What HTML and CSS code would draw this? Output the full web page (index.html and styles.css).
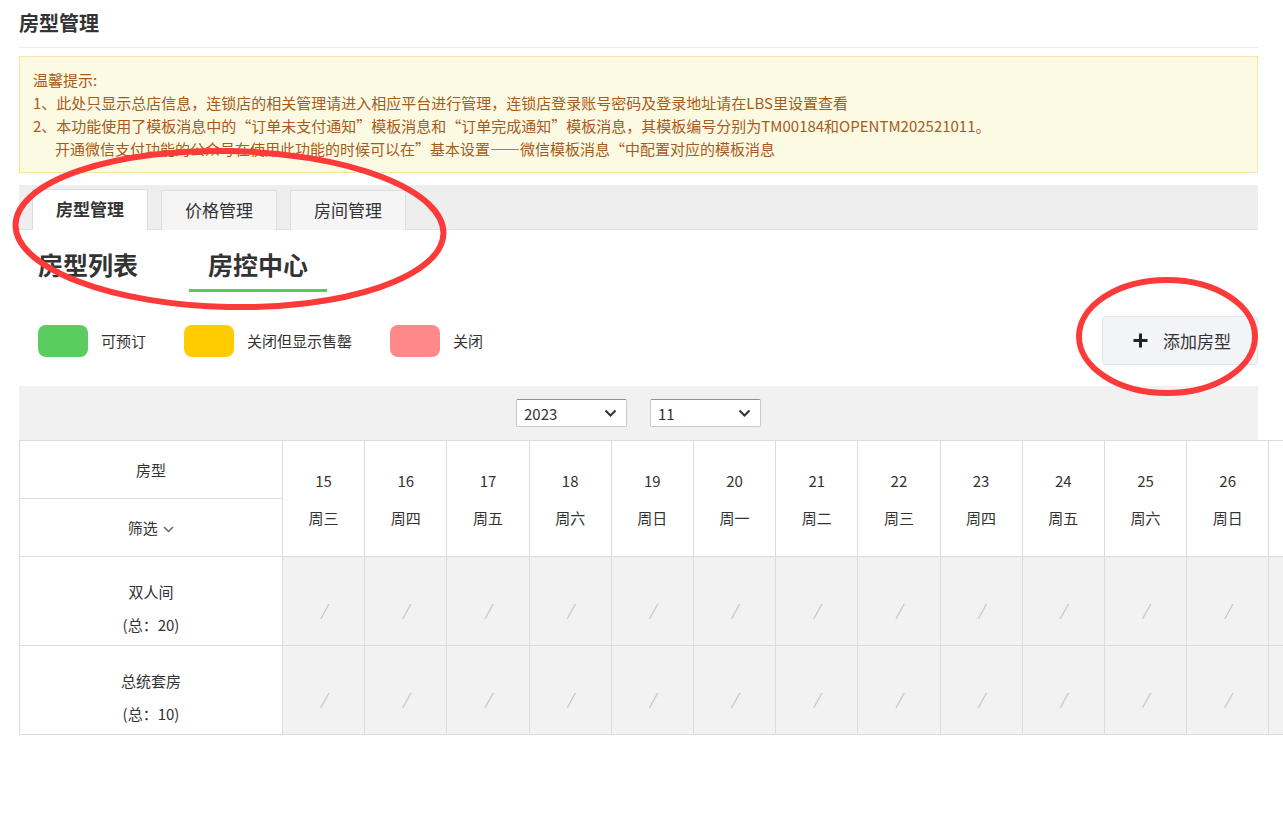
FILE: index.html
```html
<!DOCTYPE html>
<html lang="zh-CN">
<head>
    <meta charset="UTF-8">
    <title>房型管理</title>
    <link rel="stylesheet" href="styles.css">
</head>
<body>

<div class="page">
    <div class="page-title">房型管理</div>

    <!-- tips -->
    <div class="notice">
        <p>温馨提示:</p>
        <p>1、此处只显示总店信息，连锁店的相关管理请进入相应平台进行管理，连锁店登录账号密码及登录地址请在LBS里设置查看</p>
        <p>2、本功能使用了模板消息中的“订单未支付通知”模板消息和“订单完成通知”模板消息，其模板编号分别为TM00184和OPENTM202521011。</p>
        <p class="indent">开通微信支付功能的公众号在使用此功能的时候可以在”基本设置——微信模板消息“中配置对应的模板消息</p>
    </div>

    <div class="tab-bar">
        <div class="tab active">房型管理</div>
        <div class="tab">价格管理</div>
        <div class="tab">房间管理</div>
    </div>

    <div class="sub-tabs">
        <div class="sub-tab">房型列表</div>
        <div class="sub-tab current">房控中心</div>
    </div>

    <div class="legend-row">
        <div class="legend">
            <div class="legend-item"><span class="swatch green"></span>可预订</div>
            <div class="legend-item"><span class="swatch yellow"></span>关闭但显示售罄</div>
            <div class="legend-item"><span class="swatch pink"></span>关闭</div>
        </div>
        <button class="add-btn">
            <svg width="15" height="15" viewBox="0 0 15 15"><path d="M7.5 0.5v14M0.5 7.5h14" stroke="#222" stroke-width="3"/></svg>
            添加房型
        </button>
    </div>

    <div class="date-bar">
        <div class="select">2023<svg width="13" height="8" viewBox="0 0 13 8"><path d="M1.5 1.5l5 5 5-5" fill="none" stroke="#333" stroke-width="2"/></svg></div>
        <div class="select">11<svg width="13" height="8" viewBox="0 0 13 8"><path d="M1.5 1.5l5 5 5-5" fill="none" stroke="#333" stroke-width="2"/></svg></div>
    </div>

    <table class="room-table">
        <colgroup>
            <col class="col-name">
            <col span="13" class="col-day">
        </colgroup>
        <thead>
            <tr id="headRow">
                <th class="name-head">房型</th>
            </tr>
            <tr>
                <th class="name-head">筛选 <svg width="11" height="7" viewBox="0 0 11 7"><path d="M1 1l4.5 4.5L10 1" fill="none" stroke="#666" stroke-width="1.5"/></svg></th>
            </tr>
        </thead>
        <tbody id="tableBody"></tbody>
    </table>
</div>

<!-- red marks drawn over the screenshot -->
<svg class="marks" width="1283" height="833">
    <ellipse cx="229.5" cy="229" rx="214" ry="78" transform="rotate(1.2 229.5 229)" />
    <ellipse cx="1167" cy="336.5" rx="88" ry="56.5" />
</svg>

<script>
    const weekNames = ['周日', '周一', '周二', '周三', '周四', '周五', '周六'];
    const firstDay = 15, lastDay = 26;
    const rooms = [
        { name: '双人间', total: 20 },
        { name: '总统套房', total: 10 }
    ];

    const headRow = document.getElementById('headRow');
    for (let d = firstDay; d <= lastDay; d++) {
        const th = document.createElement('th');
        th.rowSpan = 2;
        th.className = 'day-head';
        const week = weekNames[new Date(2023, 10, d).getDay()];
        th.innerHTML = '<div>' + d + '</div><div>' + week + '</div>';
        headRow.appendChild(th);
    }
    // next column, cut off by the window edge
    const edge = document.createElement('th');
    edge.rowSpan = 2;
    edge.className = 'day-head';
    headRow.appendChild(edge);

    const body = document.getElementById('tableBody');
    rooms.forEach(function (room) {
        const tr = document.createElement('tr');
        let html = '<td class="name-cell"><div>' + room.name + '</div><div>(总：' + room.total + ')</div></td>';
        for (let d = firstDay; d <= lastDay; d++) {
            html += '<td class="day-cell">/</td>';
        }
        html += '<td class="day-cell"></td>';
        tr.innerHTML = html;
        body.appendChild(tr);
    });
</script>
</body>
</html>
```

FILE: styles.css
```css
html, body {
    overflow: hidden;
}

body {
    margin: 0;
    padding: 0;
    font-family: "Noto Sans CJK SC", "Noto Sans", sans-serif;
    color: #333;
    background: #fff;
}

.page {
    width: 1239px;
    margin-left: 19px;
}

.page-title {
    height: 47px;
    line-height: 46px;
    font-size: 20px;
    font-weight: bold;
    color: #333;
    border-bottom: 1px solid #ececec;
}

/* tips box */
.notice {
    margin-top: 8px;
    padding: 11px 13px 12px;
    background-color: #fdfae3;
    border: 1px solid #f6e4a4;
    color: #a65b1c;
    font-size: 15px;
    line-height: 23px;
}

.notice p {
    margin: 0;
}

.notice .indent {
    padding-left: 22px;
}

/* top tabs */
.tab-bar {
    margin-top: 12px;
    height: 44px;
    background-color: #eeeeee;
    border-bottom: 1px solid #dde2ea;
    display: flex;
    align-items: flex-end;
    gap: 13px;
    padding-left: 13px;
}

.tab {
    width: 114px;
    height: 39px;
    margin-bottom: -1px;
    line-height: 38px;
    text-align: center;
    font-size: 17px;
    color: #333;
    background-color: #f5f5f5;
    border: 1px solid #d8dee8;
    border-bottom: none;
}

.tab.active {
    background-color: #fff;
    font-weight: bold;
    height: 40px;
}

/* sub tabs */
.sub-tabs {
    display: flex;
    gap: 32px;
    margin-top: 15px;
}

.sub-tab {
    padding: 0 19px;
    height: 44px;
    line-height: 38px;
    font-size: 25px;
    font-weight: bold;
    color: #333;
}

.sub-tab.current {
    border-bottom: 3px solid #5ac85c;
}

/* legend + add button */
.legend-row {
    display: flex;
    align-items: center;
    justify-content: space-between;
    margin-top: 24px;
}

.legend {
    display: flex;
    align-items: center;
    padding-left: 19px;
}

.legend-item {
    display: flex;
    align-items: center;
    font-size: 15px;
    line-height: 18px;
    color: #333;
    margin-right: 38px;
}

.swatch {
    width: 50px;
    height: 32px;
    border-radius: 8px;
    margin-right: 13px;
    margin-top: 1px;
}

.swatch.green { background-color: #5bcd5f; }
.swatch.yellow { background-color: #ffcc00; }
.swatch.pink { background-color: #ff888b; }

.add-btn {
    display: flex;
    align-items: center;
    gap: 15px;
    width: 156px;
    height: 49px;
    padding: 0 0 0 30px;
    background-color: #f3f4f8;
    border: 1px solid #e3e5ea;
    border-radius: 4px;
    font-family: inherit;
    font-size: 17px;
    color: #333;
}

/* year / month bar */
.date-bar {
    margin-top: 21px;
    height: 54px;
    background-color: #f1f1f1;
    display: flex;
    align-items: center;
    justify-content: center;
    gap: 23px;
}

.select {
    width: 111px;
    height: 28px;
    box-sizing: border-box;
    display: flex;
    align-items: center;
    justify-content: space-between;
    padding: 0 9px 0 7px;
    background-color: #fff;
    border: 1px solid #c9c9c9;
    border-top-color: #8f8f8f;
    border-radius: 2px;
    font-size: 15px;
    color: #333;
}

/* room grid */
.room-table {
    border-collapse: collapse;
    table-layout: fixed;
    width: 1331px;
    font-size: 15px;
    color: #333;
}

.col-name { width: 263px; }
.col-day { width: 82.2px; }

.room-table th,
.room-table td {
    border: 1px solid #dcdcdc;
    text-align: center;
    padding: 0;
    font-weight: normal;
}

.name-head {
    height: 57px;
    background-color: #fff;
}

.name-head svg {
    margin-left: 2px;
    vertical-align: middle;
}

.day-head {
    background-color: #fff;
    line-height: 37px;
}

.room-table .name-cell {
    height: 74px;
    padding-top: 14px;
    line-height: 33px;
    background-color: #fff;
}

.room-table .day-cell {
    padding-top: 16px;
    background-color: #f2f2f2;
    color: #bbb;
    font-style: italic;
}

/* annotation overlay */
.marks {
    position: absolute;
    top: 0;
    left: 0;
    pointer-events: none;
}

.marks ellipse {
    fill: none;
    stroke: #fd3a3a;
    stroke-width: 6;
}
```
